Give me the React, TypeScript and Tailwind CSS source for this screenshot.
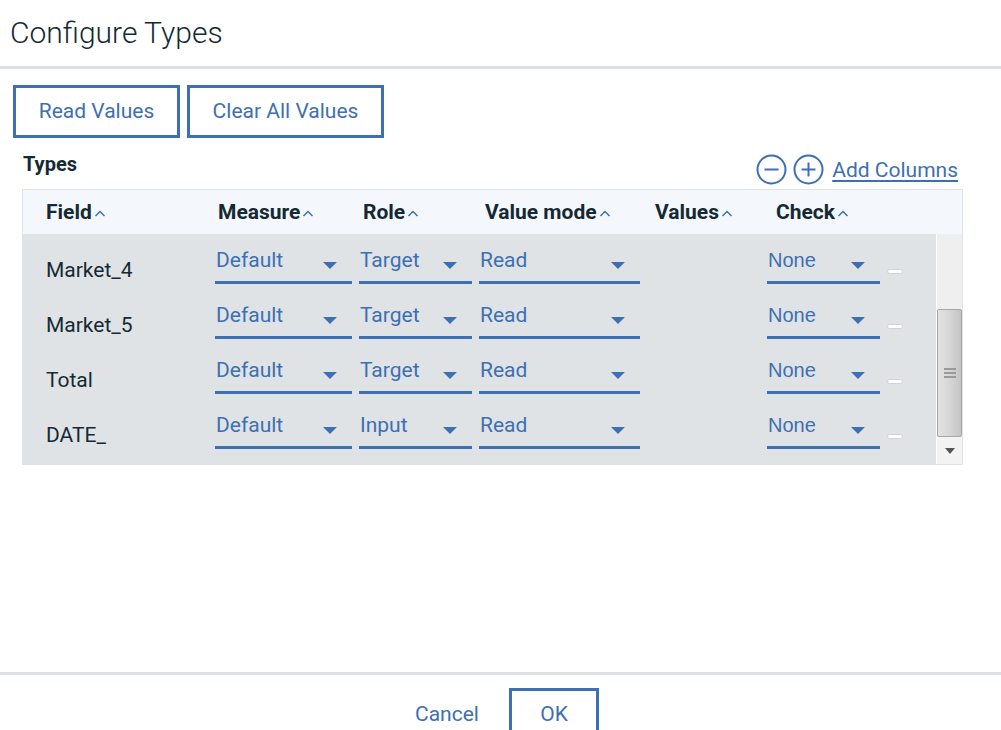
import React from "react";

type Row = { field: string; measure: string; role: string; mode: string; check: string };

const rows: Row[] = [
  { field: "Market_4", measure: "Default", role: "Target", mode: "Read", check: "None" },
  { field: "Market_5", measure: "Default", role: "Target", mode: "Read", check: "None" },
  { field: "Total", measure: "Default", role: "Target", mode: "Read", check: "None" },
  { field: "DATE_", measure: "Default", role: "Input", mode: "Read", check: "None" },
];

const headers = [
  { label: "Field", w: "w-[172px]" },
  { label: "Measure", w: "w-[145px]" },
  { label: "Role", w: "w-[122px]" },
  { label: "Value mode", w: "w-[170px]" },
  { label: "Values", w: "w-[121px]" },
  { label: "Check", w: "w-[120px]" },
];

const SortUp = () => (
  <svg width="12" height="8" viewBox="0 0 12 8" className="ml-[2px] mt-[1px]">
    <polyline points="1.5,7 6,2.5 10.5,7" fill="none" stroke="#3d70b2" strokeWidth="1.5" />
  </svg>
);

const Caret = () => (
  <svg width="14" height="7" viewBox="0 0 14 7" className="mt-[14px] shrink-0">
    <polygon points="0,0 14,0 7,7" fill="#3d70b2" />
  </svg>
);

// select look: blue text, blue underline, caret at right
const Select = ({ value, w, arial }: { value: string; w: string; arial?: boolean }) => (
  <div
    className={`${w} h-[36px] shrink-0 flex justify-between pr-[15px] border-b-[3px] border-[#3d70b2]`}
  >
    <span
      className={`pl-[1px] leading-[24px] text-[#3d70b2] ${arial ? "text-[20px] font-['Liberation_Sans',Arial,sans-serif]" : "text-[21px]"}`}
    >
      {value}
    </span>
    <Caret />
  </div>
);

const CircleIcon = ({ plus }: { plus?: boolean }) => (
  <svg width="31" height="31" viewBox="0 0 31 31">
    <circle cx="15.5" cy="15.5" r="14" fill="none" stroke="#3d70b2" strokeWidth="2" />
    <line x1="8.5" y1="15.5" x2="22.5" y2="15.5" stroke="#3d70b2" strokeWidth="2" />
    {plus && <line x1="15.5" y1="8.5" x2="15.5" y2="22.5" stroke="#3d70b2" strokeWidth="2" />}
  </svg>
);

export default function App() {
  return (
    <div className="w-[1001px] h-[730px] overflow-hidden bg-white flex flex-col font-['Roboto',sans-serif] text-[#152935]">
      {/* TITLE */}
      <div className="h-[69px] shrink-0 flex items-center pl-[10px] border-b-[3px] border-[#dde0e4]">
        <h1 className="text-[30px] font-light leading-none">Configure Types</h1>
      </div>

      {/* ACTION BUTTONS */}
      <div className="shrink-0 flex gap-[7px] pt-[16px] pl-[13px]">
        <button className="w-[167px] h-[53px] border-[3px] border-[#3d70b2] text-[21px] text-[#3d70b2]">
          Read Values
        </button>
        <button className="w-[197px] h-[53px] border-[3px] border-[#3d70b2] text-[21px] text-[#3d70b2]">
          Clear All Values
        </button>
      </div>

      {/* TYPES LABEL + ADD COLUMNS */}
      <div className="shrink-0 h-[51px] w-[941px] ml-[22px] flex justify-between">
        <span className="pl-[1px] mt-[14px] text-[20px] leading-[24px] font-bold">Types</span>
        <div className="self-end pb-[4px] pr-[5px] flex items-center gap-[6px]">
          <CircleIcon />
          <CircleIcon plus />
          <span className="ml-[2px] text-[21px] leading-[24px] text-[#3d70b2] underline underline-offset-[3px]">
            Add Columns
          </span>
        </div>
      </div>

      {/* TABLE */}
      <div className="shrink-0 w-[941px] ml-[22px] border border-[#dfe3e6]">
        <div className="h-[44px] bg-[#f4f7fb] flex items-center pl-[23px]">
          {headers.map((h) => (
            <div key={h.label} className={`${h.w} flex items-center`}>
              <span className="text-[21px] font-bold leading-none">{h.label}</span>
              <SortUp />
            </div>
          ))}
        </div>
        <div className="h-[230px] bg-[#dfe3e6] flex">
          <div className="flex-1 flex flex-col gap-[19px] pt-[14px]">
            {rows.map((r) => (
              <div key={r.field} className="h-[36px] flex">
                <div className="w-[192px] shrink-0 pl-[23px] pt-[10px] text-[21px] leading-[24px]">
                  {r.field}
                </div>
                <Select value={r.measure} w="w-[137px]" />
                <div className="w-[7px] shrink-0" />
                <Select value={r.role} w="w-[113px]" />
                <div className="w-[7px] shrink-0" />
                <Select value={r.mode} w="w-[161px]" />
                <div className="w-[127px] shrink-0" />
                <Select value={r.check} w="w-[113px]" arial />
                <div className="w-[16px] h-[5px] ml-[7px] mt-[21px] rounded-full bg-white border border-[#cfd3d6]" />
              </div>
            ))}
          </div>
          {/* SCROLLBAR */}
          <div className="w-[26px] shrink-0 border-l border-white bg-[#efefef] flex flex-col">
            <div className="h-[75px]" />
            <div className="h-[128px] border border-[#a6a6a6] rounded-[2px] bg-linear-to-r from-[#e2e2e2] via-[#d6d6d6] to-[#c4c4c4] flex flex-col items-center justify-center gap-[2px]">
              <div className="w-[12px] h-[2px] bg-[#9a9a9a]" />
              <div className="w-[12px] h-[2px] bg-[#9a9a9a]" />
              <div className="w-[12px] h-[2px] bg-[#9a9a9a]" />
            </div>
            <div className="flex-1 flex items-center justify-center bg-[#f3f3f3]">
              <svg width="10" height="6" viewBox="0 0 10 6">
                <polygon points="0,0 10,0 5,6" fill="#555" />
              </svg>
            </div>
          </div>
        </div>
      </div>

      <div className="flex-1" />

      {/* FOOTER */}
      <div className="h-[58px] shrink-0 border-t-[3px] border-[#dde0e4] flex justify-center gap-[17px] pt-[13px] overflow-hidden">
        <button className="w-[90px] h-[53px] shrink-0 text-[21px] text-[#3d70b2]">Cancel</button>
        <button className="w-[90px] h-[53px] shrink-0 border-[3px] border-[#3d70b2] text-[21px] text-[#3d70b2]">
          OK
        </button>
      </div>
    </div>
  );
}
